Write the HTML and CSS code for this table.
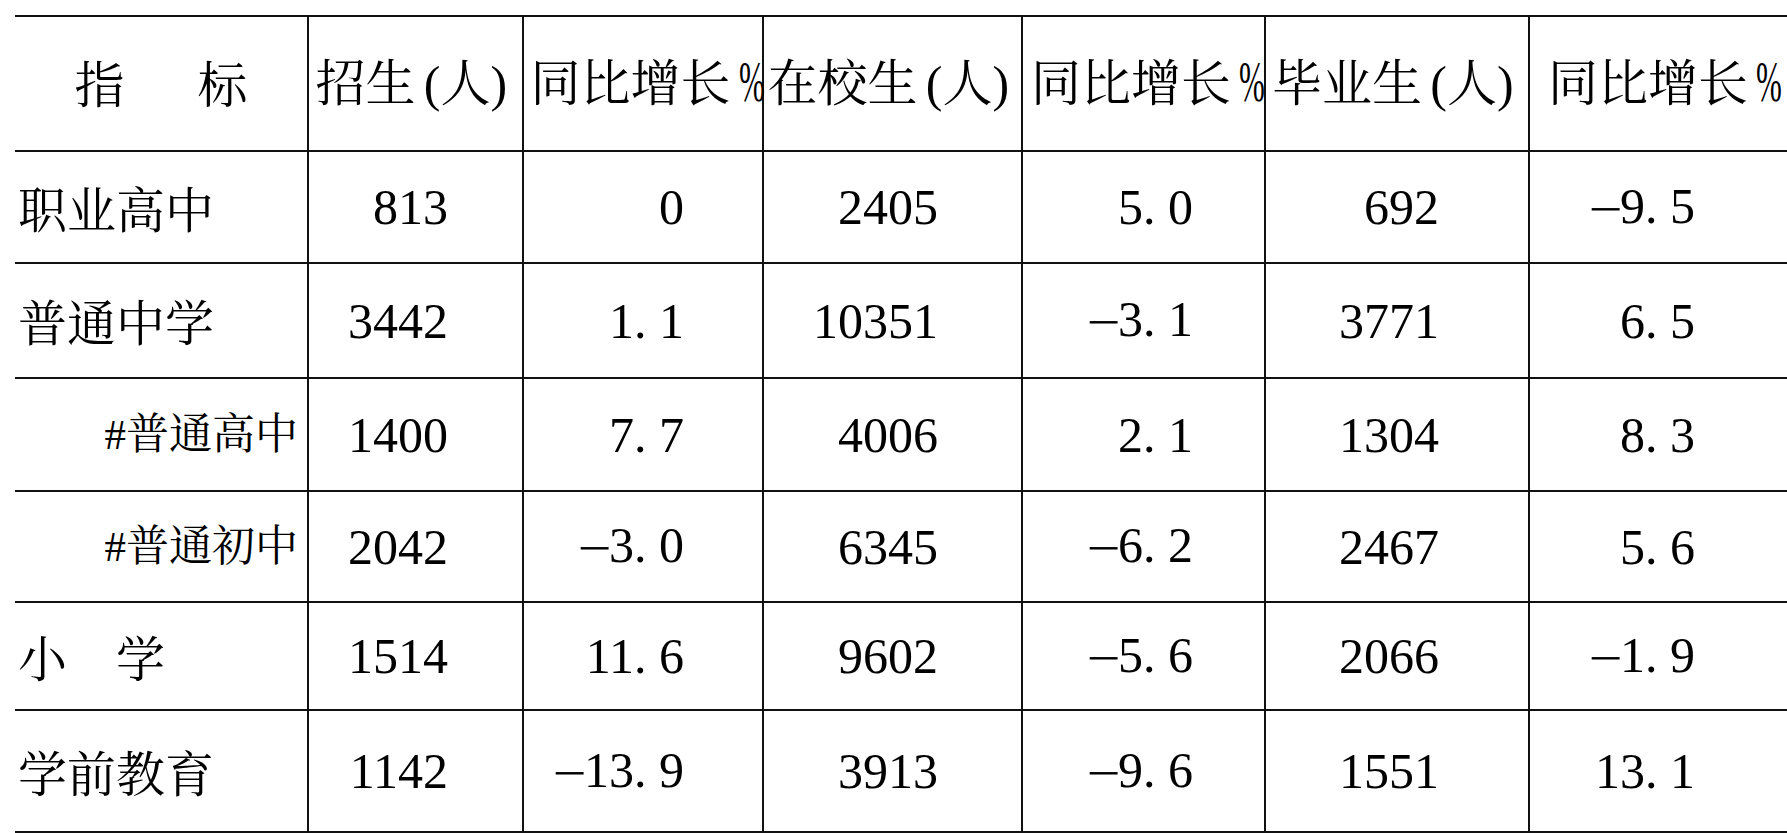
FILE: index.html
```html
<!DOCTYPE html>
<html lang="zh-CN">
<head>
<meta charset="utf-8">
<title>教育统计</title>
<link rel="stylesheet" href="styles.css">
</head>
<body>
<table class="stats">
  <colgroup>
    <col class="w0"><col class="w1"><col class="w2"><col class="w3"><col class="w4"><col class="w5"><col class="w6">
  </colgroup>
  <thead>
    <tr>
      <th><span class="spread"><span>指</span><span>标</span></span></th>
      <th>招生<span class="hw po">(</span>人<span class="hw pc">)</span></th>
      <th>同比增长<span class="hw pct"><span>%</span></span></th>
      <th>在校生<span class="hw po">(</span>人<span class="hw pc">)</span></th>
      <th>同比增长<span class="hw pct"><span>%</span></span></th>
      <th>毕业生<span class="hw po">(</span>人<span class="hw pc">)</span></th>
      <th>同比增长<span class="hw pct"><span>%</span></span></th>
    </tr>
  </thead>
  <tbody>
    <tr>
      <td class="label">职业高中</td>
      <td>813</td><td>0</td><td>2405</td><td>5<span class="dot">.</span>0</td><td>692</td><td><span class="neg">−</span>9<span class="dot">.</span>5</td>
    </tr>
    <tr>
      <td class="label">普通中学</td>
      <td>3442</td><td>1<span class="dot">.</span>1</td><td>10351</td><td><span class="neg">−</span>3<span class="dot">.</span>1</td><td>3771</td><td>6<span class="dot">.</span>5</td>
    </tr>
    <tr>
      <td class="label sub">#普通高中</td>
      <td>1400</td><td>7<span class="dot">.</span>7</td><td>4006</td><td>2<span class="dot">.</span>1</td><td>1304</td><td>8<span class="dot">.</span>3</td>
    </tr>
    <tr>
      <td class="label sub">#普通初中</td>
      <td>2042</td><td><span class="neg">−</span>3<span class="dot">.</span>0</td><td>6345</td><td><span class="neg">−</span>6<span class="dot">.</span>2</td><td>2467</td><td>5<span class="dot">.</span>6</td>
    </tr>
    <tr>
      <td class="label">小　学</td>
      <td>1514</td><td>11<span class="dot">.</span>6</td><td>9602</td><td><span class="neg">−</span>5<span class="dot">.</span>6</td><td>2066</td><td><span class="neg">−</span>1<span class="dot">.</span>9</td>
    </tr>
    <tr>
      <td class="label">学前教育</td>
      <td>1142</td><td><span class="neg">−</span>13<span class="dot">.</span>9</td><td>3913</td><td><span class="neg">−</span>9<span class="dot">.</span>6</td><td>1551</td><td>13<span class="dot">.</span>1</td>
    </tr>
  </tbody>
</table>
</body>
</html>
```

FILE: styles.css
```css
html, body {
  margin: 0;
  padding: 0;
  background: #fff;
  overflow: hidden;
}

.stats {
  margin: 15px 0 0 15px;
  border-collapse: collapse;
  table-layout: fixed;
  width: 1776px;
  color: #000;
  font-family: "Liberation Serif", "Noto Serif CJK SC", "Noto Sans CJK SC", serif;
  font-size: 50px;
  line-height: 1;
}

.w0 { width: 293px; }
.w1 { width: 215px; }
.w2 { width: 240px; }
.w3 { width: 259px; }
.w4 { width: 243px; }
.w5 { width: 264px; }
.w6 { width: 262px; }

.stats th,
.stats td {
  border: 2px solid #111;
  padding: 0;
  vertical-align: middle;
  white-space: nowrap;
  overflow: visible;
}

.stats th:first-child,
.stats td:first-child {
  border-left: none;
}

.stats th:last-child,
.stats td:last-child {
  border-right: none;
}

.stats th {
  font-weight: normal;
  text-align: center;
  height: 133px;
}

.spread {
  display: inline-flex;
  gap: 73px;
  font-family: "Noto Serif CJK SC", "Noto Sans CJK SC", sans-serif;
}

.hw {
  display: inline-block;
  width: 0.5em;
}
.po { text-align: right; }
.pc { text-align: left; }
.pct { text-align: center; }
.pct span {
  display: inline-block;
  transform: scale(0.62, 1.12);
  transform-origin: 50% 85%;
}

.stats td {
  text-align: right;
}

.stats tbody tr:nth-child(1) td { height: 110px; }
.stats tbody tr:nth-child(2) td { height: 113px; }
.stats tbody tr:nth-child(3) td { height: 111px; }
.stats tbody tr:nth-child(4) td { height: 109px; }
.stats tbody tr:nth-child(5) td { height: 106px; }
.stats tbody tr:nth-child(6) td { height: 120px; }

.stats td:nth-child(2) { padding-right: 74px; }
.stats td:nth-child(3) { padding-right: 78px; }
.stats td:nth-child(4) { padding-right: 83px; }
.stats td:nth-child(5) { padding-right: 71px; }
.stats td:nth-child(6) { padding-right: 89px; }
.stats td:nth-child(7) { padding-right: 96px; }

.stats td.label {
  text-align: left;
  padding-left: 3px;
  font-size: 49px;
  font-family: "Noto Serif CJK SC", "Noto Sans CJK SC", sans-serif;
}

.stats td.label.sub {
  text-align: right;
  padding-left: 0;
  padding-right: 9px;
  font-size: 43px;
  font-family: "Liberation Serif", "Noto Serif CJK SC", "Noto Sans CJK SC", serif;
}

.dot {
  display: inline-block;
  width: 0.5em;
  text-align: left;
}

.neg {
  display: inline-block;
  width: 0.5em;
  text-align: center;
  vertical-align: -0.06em;
  transform: translateX(-4px) scaleX(1.2);
}
```
